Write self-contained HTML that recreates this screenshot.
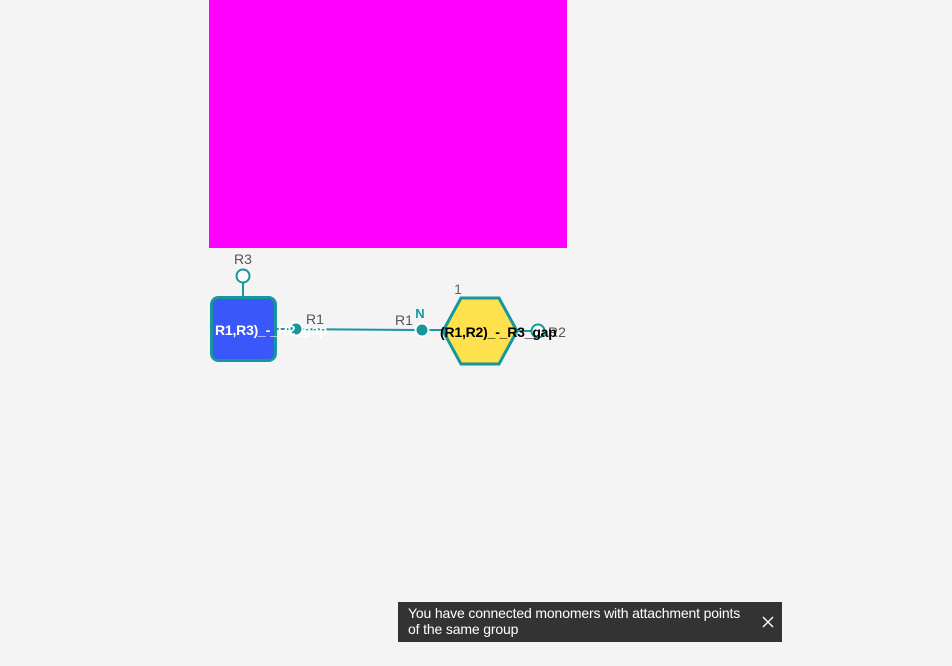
<!DOCTYPE html>
<html><head><style>
body{margin:0;width:952px;height:666px;background:#f4f4f4;overflow:hidden;position:relative;font-family:"Liberation Sans",sans-serif}
#toast{position:absolute;left:398px;top:602px;width:384px;height:40px;background:#333;color:#fff;font-size:14px;letter-spacing:-0.15px;line-height:16px;box-sizing:border-box;padding:3px 10px}
#x{position:absolute;right:8px;top:14px}
</style></head><body>
<svg width="952" height="666" style="position:absolute;left:0;top:0" font-family="Liberation Sans, sans-serif">
<rect x="209" y="0" width="358" height="248" fill="#ff00ff"/>
<line x1="243" y1="282" x2="243" y2="297" stroke="#16979c" stroke-width="2"/>
<line x1="276" y1="329" x2="422" y2="330" stroke="#16979c" stroke-width="2"/>
<line x1="422" y1="330" x2="445" y2="330" stroke="#16979c" stroke-width="2"/>
<line x1="517" y1="331" x2="538" y2="331" stroke="#16979c" stroke-width="2"/>
<rect x="211.5" y="297.5" width="64" height="63" rx="7" fill="#3a57fa" stroke="#16979c" stroke-width="3"/>
<circle cx="243" cy="276" r="6.5" fill="#fff" stroke="#16979c" stroke-width="2"/>
<text x="243" y="264" font-size="14" fill="#555" text-anchor="middle">R3</text>
<circle cx="296" cy="329" r="6.5" fill="#16979c" stroke="#fff" stroke-width="2"/>
<text x="315" y="324" font-size="14" fill="#555" text-anchor="middle">R1</text>
<text x="215" y="335" font-size="14" font-weight="bold" fill="#fff" letter-spacing="-0.2">R1,R3)_-_R2_gap</text>
<polygon points="443,331 461,298 499,298 517,331 499,364 461,364" fill="#ffe14d" stroke="#16979c" stroke-width="3"/>
<text x="458" y="294" font-size="14" fill="#666" text-anchor="middle">1</text>
<circle cx="422" cy="330" r="6.5" fill="#16979c" stroke="#fff" stroke-width="2"/>
<text x="404" y="325" font-size="14" fill="#555" text-anchor="middle">R1</text>
<text x="420" y="318" font-size="13" font-weight="bold" fill="#16979c" text-anchor="middle">N</text>
<circle cx="538" cy="331" r="6.5" fill="#fff" stroke="#16979c" stroke-width="2"/>
<text x="548" y="337" font-size="14" fill="#555">R2</text>
<text x="440" y="337" font-size="14" font-weight="bold" fill="#000" letter-spacing="-0.2">(R1,R2)_-_R3_gap</text>
</svg>
<div id="toast">You have connected monomers with attachment points<br>of the same group<svg id="x" width="12" height="12"><path d="M1 1L11 11M11 1L1 11" stroke="#fff" stroke-width="1.4"/></svg></div>
</body></html>
